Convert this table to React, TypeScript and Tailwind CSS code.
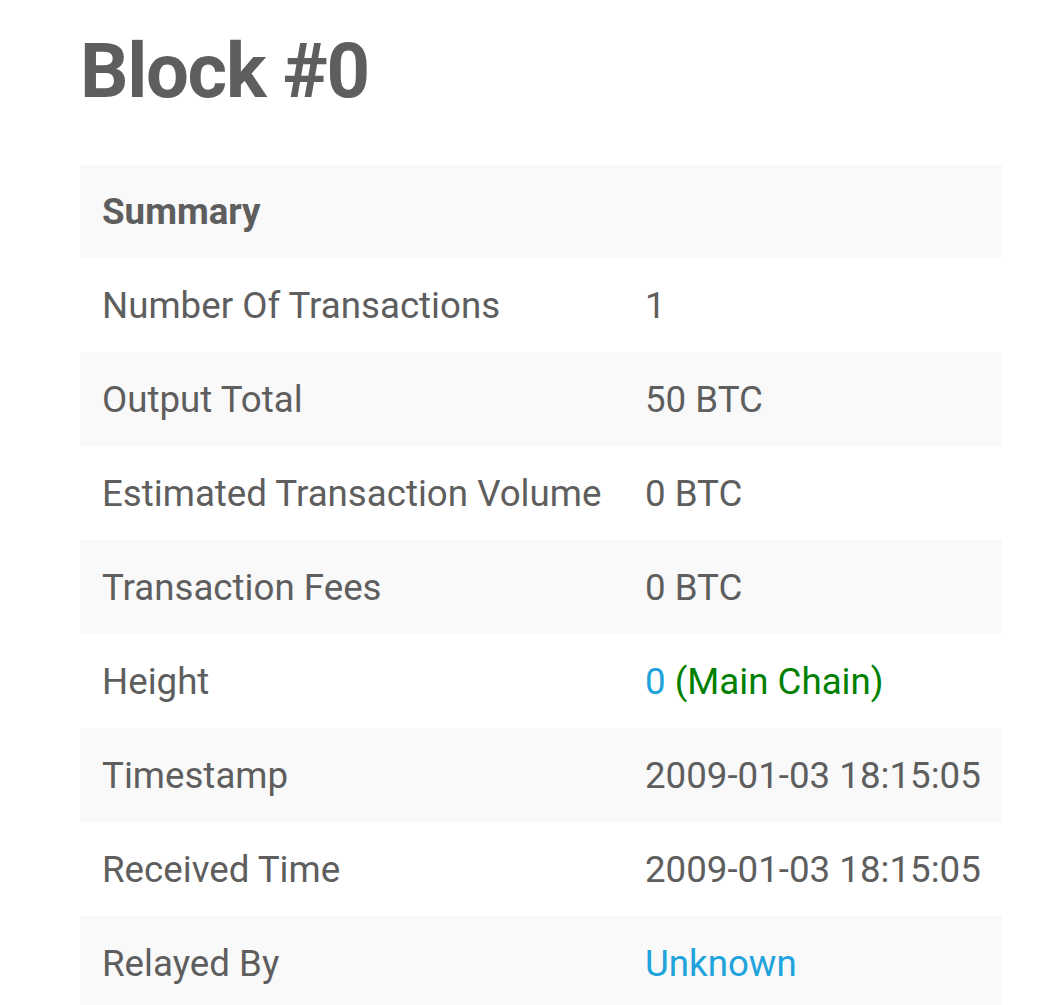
const rows: { label: string; value: React.ReactNode }[] = [
  { label: "Number Of Transactions", value: "1" },
  { label: "Output Total", value: "50 BTC" },
  { label: "Estimated Transaction Volume", value: "0 BTC" },
  { label: "Transaction Fees", value: "0 BTC" },
  {
    label: "Height",
    value: (
      <>
        <a className="text-[#20a3dc]">0</a> <span className="text-[#008000]">(Main Chain)</span>
      </>
    ),
  },
  { label: "Timestamp", value: "2009-01-03 18:15:05" },
  { label: "Received Time", value: "2009-01-03 18:15:05" },
  { label: "Relayed By", value: <a className="text-[#20a3dc]">Unknown</a> },
];

export default function App() {
  return (
    <div className="min-h-screen bg-white text-[#5e5e5e]" style={{ fontFamily: "Roboto, 'Liberation Sans', sans-serif" }}>
      <div className="px-[80px] pt-[26px]">
        <h1 className="text-[76px] font-bold leading-[90px] tracking-[-1.3px]">Block #0</h1>
        <div className="mt-[49px] w-[922px]">
          <div className="flex h-[93px] items-center bg-[#f9f9f9] px-[22px] pt-[1px] text-[36.7px] font-bold">Summary</div>
          {rows.map((row, i) => (
            <div key={row.label} className={`flex h-[94px] items-center pt-[1px] text-[36.7px] ${i % 2 === 1 ? "bg-[#f9f9f9]" : "bg-white"}`}>
              <div className="w-[543px] shrink-0 pl-[22px]">{row.label}</div>
              <div className="pl-[22px]">{row.value}</div>
            </div>
          ))}
        </div>
      </div>
    </div>
  );
}
